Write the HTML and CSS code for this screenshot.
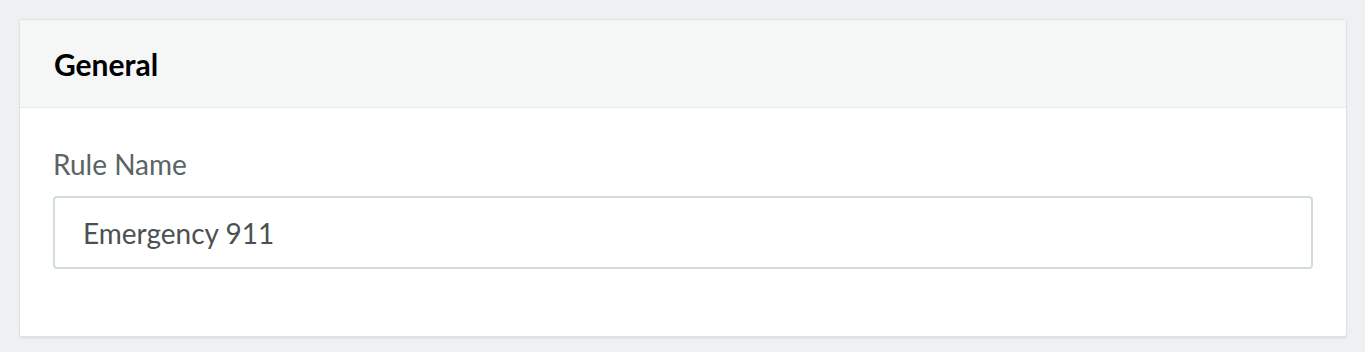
FILE: index.html
```html
<!doctype html>
<html>
  <head>
    <meta charset="UTF-8" />
    <title>General</title>
    <link rel="stylesheet" href="styles.css">
  </head>
  <body>
    <div class="card">
      <div class="card-header">
        <h2>General</h2>
      </div>
      <div class="card-body">
        <label class="field-label" for="rule-name">Rule Name</label>
        <input id="rule-name" class="field-input" type="text" value="Emergency 911" />
      </div>
    </div>
  </body>
</html>
```

FILE: styles.css
```css
body {
  margin: 0;
  padding: 19px 18px 15px 19px;
  background-color: #eef1f2;
  font-family: Lato, "Open Sans", sans-serif;
}

.card {
  background-color: #fff;
  border: 1px solid #dde3e4;
  border-radius: 3px;
  box-shadow: 0 2px 2px rgba(0, 0, 0, 0.06);
}

.card-header {
  height: 87px;
  padding: 0 34px;
  display: flex;
  align-items: center;
  background-color: #f5f7f7;
  border-bottom: 1px solid #e6eaeb;
  border-radius: 3px 3px 0 0;
}

.card-header h2 {
  margin: 0;
  font-size: 30px;
  font-weight: 700;
  color: #000;
}

.card-body {
  padding: 38px 33px 67px;
}

.field-label {
  display: block;
  font-size: 28px;
  line-height: 36px;
  color: #5a6466;
  margin-bottom: 14px;
}

.field-input {
  display: block;
  box-sizing: border-box;
  width: 100%;
  height: 73px;
  padding: 0 28px;
  border: 2px solid #d3dcdd;
  border-radius: 4px;
  font-family: inherit;
  font-size: 28px;
  color: #4b5153;
  outline: none;
}
```
